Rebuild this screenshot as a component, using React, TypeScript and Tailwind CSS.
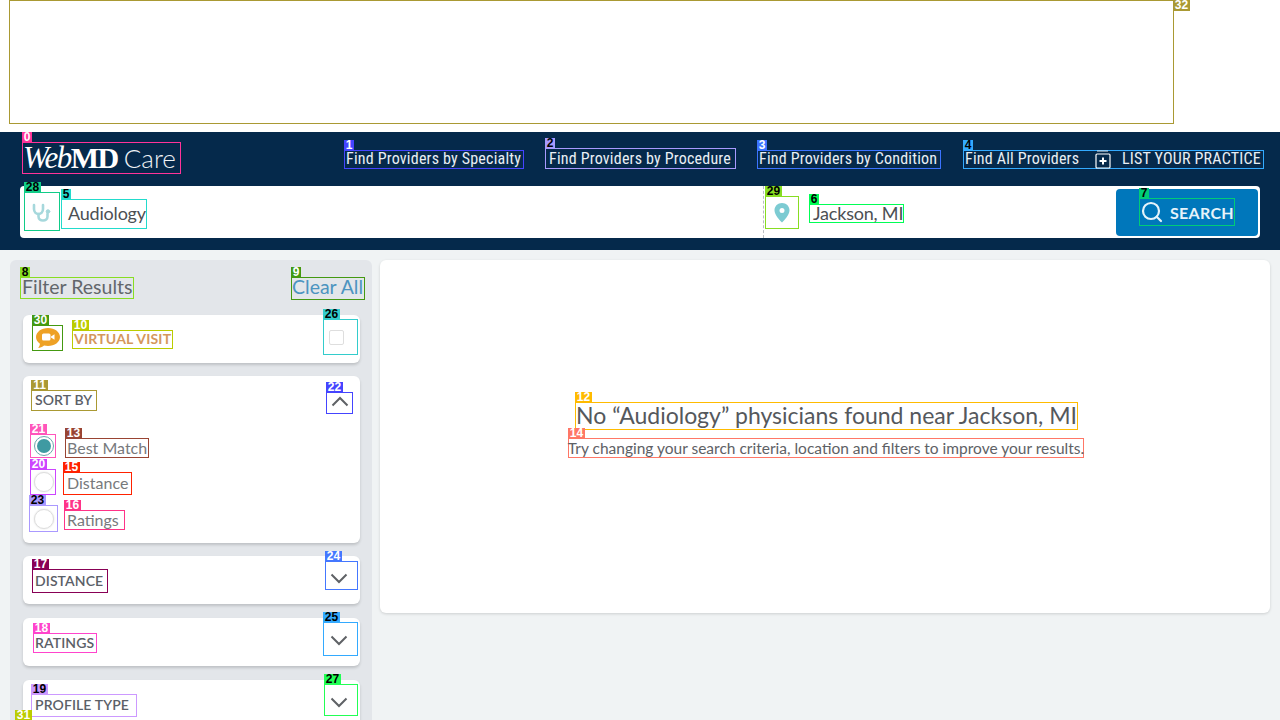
import React from "react";
import { Search } from "lucide-react";

const sans = "font-['Lato','Liberation_Sans',sans-serif]";

function Mark({
  n,
  box,
  tag,
  className = "",
  tagClass = "left-[-1px] top-[-11px]",
  children,
}: {
  n: number;
  box: string;
  tag: string;
  className?: string;
  tagClass?: string;
  children?: React.ReactNode;
}) {
  return (
    <div className={`relative border shrink-0 ${box} ${className}`}>
      {children}
      <span
        className={`absolute z-10 h-[11px] ${n > 9 ? "w-[17px]" : "w-[10px]"} text-center text-[12px] leading-[11px] font-bold font-['Liberation_Sans',sans-serif] tracking-normal whitespace-nowrap ${tag} ${tagClass}`}
      >
        {n}
      </span>
    </div>
  );
}

function Stethoscope() {
  return (
    <svg width="22" height="22" viewBox="0 0 22 22" fill="none" stroke="#a6d8dc" strokeWidth="2.6" strokeLinecap="round">
      <path d="M3 4v4c0 3 2 5 4.500 5s4.500-2 4.500-5V4" />
      <path d="M7.500 13v2.500c0 2.500 2 4 4.500 4s4.500-1.500 4.500-4V13" />
      <circle cx="17" cy="10.500" r="1.800" fill="#a6d8dc" strokeWidth="1" />
    </svg>
  );
}

function Pin() {
  return (
    <svg width="16" height="20" viewBox="0 0 16 20" className="mt-[1px]">
      <path
        fillRule="evenodd"
        d="M8 0c4.300 0 7.500 3.200 7.500 7.300C15.500 12 10.500 17 8 19.500 5.500 17 .5 12 .5 7.300.5 3.200 3.700 0 8 0zm0 5a2.500 2.500 0 100 5 2.500 2.500 0 000-5z"
        fill="#7ccbd2"
      />
    </svg>
  );
}

function VideoBubble() {
  return (
    <svg width="26" height="22" viewBox="0 0 26 22">
      <path d="M13 1c6.600 0 12 3.900 12 9s-5.400 9-12 9c-1.400 0-2.700-.2-3.900-.5C7.400 19.800 5 21 3 21c1-1 1.900-2.700 1.900-4.300C2.500 15 1 12.700 1 10c0-5.100 5.400-9 12-9z" fill="#eea125" />
      <rect x="7" y="6.500" width="8.500" height="7" rx="1.500" fill="#fff" />
      <path d="M16 9.500l3.500-2.300v5.600L16 10.500z" fill="#fff" />
    </svg>
  );
}

function PlusBox() {
  return (
    <svg width="16" height="19" viewBox="0 0 16 19" fill="none" className="shrink-0">
      <path d="M2 1h11" stroke="#dfe6ec" strokeWidth="1" />
      <rect x="1" y="4" width="14" height="14" rx="1" fill="#05294b" stroke="#fff" strokeWidth="1.200" />
      <path d="M8 7.500v7M4.500 11h7" stroke="#fff" strokeWidth="2" />
    </svg>
  );
}

function Chevron({ up }: { up?: boolean }) {
  return (
    <svg width="18" height="11" viewBox="0 0 18 11" fill="none" stroke="#5f6266" strokeWidth="2">
      <path d={up ? "M1.500 9.500L9 2l7.500 7.500" : "M1.500 1.500L9 9l7.500-7.500"} />
    </svg>
  );
}

function Radio({ on }: { on?: boolean }) {
  return (
    <span
      className={`block w-[20px] h-[20px] rounded-full border bg-white ${
        on ? "border-[#6aa7ab] p-[2px]" : "border-[#dedede] shadow-[0_0_2px_#e0e0e0]"
      }`}
    >
      {on && <span className="block w-full h-full rounded-full bg-[#3f9aa2]" />}
    </span>
  );
}

const navText =
  "font-['Roboto',sans-serif] text-[16px] leading-[17px] text-[#e9eff5] whitespace-nowrap [font-stretch:75%] tracking-[0.2px]";

const cardClass =
  "bg-white rounded-[6px] shadow-[0_2px_3px_rgba(0,0,0,0.16)] mx-[13px] w-[337px]";
const headText = "text-[14px] leading-[17px] font-semibold text-[#5b6067] tracking-[0.1px] whitespace-nowrap -mt-[2px]";
const radioText = "text-[16px] leading-[18px] text-[#77797c] whitespace-nowrap";

export default function App() {
  return (
    <div className={`w-[1280px] h-[720px] overflow-hidden bg-[#f0f3f4] ${sans}`}>
      {/* ad slot */}
      <div className="h-[132px] bg-white pl-[9px]">
        <Mark
          n={32}
          box="border-[#aa9933]"
          tag="bg-[#aa9933] text-white"
          tagClass="left-full top-[-1px]"
          className="w-[1165px] h-[124px]"
        />
      </div>

      {/* header */}
      <header className="h-[118px] bg-[#05294b] px-[20px] pt-[10px]">
        <div className="flex justify-between items-end h-[32px] pl-[2px] mr-[-4px]">
          <Mark n={0} box="border-[#ff3399]" tag="bg-[#ff3399] text-white" className="w-[159px] h-[32px] flex items-center whitespace-nowrap text-white">
            <span className="font-['Liberation_Serif',serif] italic text-[31px] leading-[30px] tracking-[-1.5px]">Web</span>
            <span className="font-['Liberation_Serif',serif] font-bold text-[30px] leading-[30px] tracking-[-1.5px]">MD</span>
            <span className="font-['Lato',sans-serif] font-light text-[26px] leading-[30px] ml-[6px] text-[#eef2f6]">Care</span>
          </Mark>
          <nav className="flex items-end gap-[21px] pb-[5px]">
            <Mark n={1} box="border-[#4444ff]" tag="bg-[#4444ff] text-white" className="w-[180px] h-[19px] pl-[1px] pb-[2px] flex items-center">
              <span className={navText}>Find Providers by Specialty</span>
            </Mark>
            <Mark n={2} box="border-[#a89aff]" tag="bg-[#a89aff] text-black" className="w-[191px] h-[21px] pl-[3px] flex items-center">
              <span className={navText}>Find Providers by Procedure</span>
            </Mark>
            <Mark n={3} box="border-[#3b73ff]" tag="bg-[#3b73ff] text-white" className="w-[184px] h-[19px] pl-[1px] pb-[2px] flex items-center">
              <span className={navText}>Find Providers by Condition</span>
            </Mark>
            <Mark n={4} box="border-[#33aaff]" tag="bg-[#33aaff] text-black" className="w-[301px] h-[19px] ml-[1px] pl-[1px] flex items-center">
              <span className={`${navText} w-[130px] -mt-[2px]`}>Find All Providers</span>
              <PlusBox />
              <span className={`${navText} ml-[11px] -mt-[2px]`}>LIST YOUR PRACTICE</span>
            </Mark>
          </nav>
        </div>

        {/* search bar */}
        <div className="mt-[12px] h-[52px] rounded-[4px] bg-white flex items-center">
          <div className="w-[744px] h-full flex items-center pl-[4px] border-r border-dashed border-[#b9bec3]">
            <Mark n={28} box="border-[#11cc88]" tag="bg-[#11cc88] text-black" className="w-[36px] h-[39px] flex items-center justify-center -mt-[1px]">
              <Stethoscope />
            </Mark>
            <Mark n={5} box="border-[#22dbcc]" tag="bg-[#22dbcc] text-black" className="w-[86px] h-[30px] ml-[1px] mt-[3px] flex items-center pl-[6px] text-[18px] tracking-[-0.2px] text-[#4c4f53]">
              Audiology
            </Mark>
          </div>
          <Mark n={29} box="border-[#88dd22]" tag="bg-[#88dd22] text-black" className="w-[34px] h-[33px] ml-[1px] flex items-center justify-center">
            <Pin />
          </Mark>
          <Mark n={6} box="border-[#00ff55]" tag="bg-[#00ff55] text-black" className="w-[95px] h-[19px] ml-[10px] mt-[2px] flex items-center pl-[3px] text-[18px] tracking-[-0.2px] leading-[19px] text-[#4c4f53] whitespace-nowrap">
            Jackson, MI
          </Mark>
          <button className="ml-[212px] w-[142px] h-[47px] rounded-[4px] bg-[#0077bb] flex items-center justify-center">
            <Mark n={7} box="border-[#00cc77]" tag="bg-[#00cc77] text-black" className="w-[96px] h-[28px] flex items-center text-[#e6f3fa]">
              <Search size={24} strokeWidth={2.2} className="shrink-0" />
              <span className="ml-[6px] mt-[2px] text-[16px] font-bold tracking-[0.3px]">SEARCH</span>
            </Mark>
          </button>
        </div>
      </header>

      {/* body */}
      <div className="flex items-start gap-[8px] pl-[10px] pt-[10px]">
        <aside className="relative w-[362px] h-[470px] rounded-t-[6px] bg-[#e3e6ea]">
          <div className="flex justify-between pl-[10px] pr-[7px] pt-[17px] h-[55px]">
            <Mark n={8} box="border-[#88dd22]" tag="bg-[#88dd22] text-black" className="w-[114px] h-[22px] pl-[1px] pb-[3px] flex items-center text-[19.500px] text-[#62666b] whitespace-nowrap">
              Filter Results
            </Mark>
            <Mark n={9} box="border-[#449911]" tag="bg-[#449911] text-white" className="w-[74px] h-[23px] pb-[3px] flex items-center text-[19.500px] text-[#4c94c0] whitespace-nowrap">
              Clear All
            </Mark>
          </div>

          {/* virtual visit */}
          <div className={`${cardClass} h-[48px] flex pl-[9px]`}>
            <Mark n={30} box="border-[#449911]" tag="bg-[#449911] text-white" className="w-[31px] h-[26px] mt-[10px] flex items-center justify-center">
              <VideoBubble />
            </Mark>
            <Mark n={10} box="border-[#bbcc00]" tag="bg-[#bbcc00] text-white" className="w-[101px] h-[19px] ml-[9px] mt-[15px] pl-[1px] pb-[2px] flex items-center text-[14px] font-bold text-[#d4975c] tracking-[0.2px] whitespace-nowrap">
              VIRTUAL VISIT
            </Mark>
            <Mark n={26} box="border-[#33cccc]" tag="bg-[#33cccc] text-black" className="w-[35px] h-[36px] ml-[150px] mt-[4px] flex items-center justify-center pr-[9px]">
              <span className="block w-[15px] h-[15px] rounded-[2px] border border-[#dedede]" />
            </Mark>
          </div>

          {/* sort by */}
          <div className={`${cardClass} h-[167px] mt-[13px] pl-[8px] relative`}>
            <div className="flex pt-[14px]">
              <Mark n={11} box="border-[#aa9933]" tag="bg-[#aa9933] text-white" className="w-[66px] h-[21px] pl-[3px] flex items-center">
                <span className={headText}>SORT BY</span>
              </Mark>
              <Mark n={22} box="border-[#4444ff]" tag="bg-[#4444ff] text-white" className="w-[27px] h-[22px] ml-[229px] mt-[2px] flex items-center justify-center pb-[4px]">
                <Chevron up />
              </Mark>
            </div>
            <div className="flex mt-[20px] ml-[-1px] h-[24px]">
              <Mark n={21} box="border-[#ff55bb]" tag="bg-[#ff55bb] text-white" className="w-[26px] h-[24px] flex items-center justify-center pl-[2px]">
                <Radio on />
              </Mark>
              <Mark n={13} box="border-[#994433]" tag="bg-[#994433] text-white" className="w-[84px] h-[20px] ml-[9px] mt-[4px] pl-[1px] flex items-center">
                <span className={radioText}>Best Match</span>
              </Mark>
            </div>
            <div className="flex mt-[11px] ml-[-1px] h-[26px]">
              <Mark n={20} box="border-[#cc44ff]" tag="bg-[#cc44ff] text-white" className="w-[26px] h-[26px] flex items-center justify-center pl-[2px]">
                <Radio />
              </Mark>
              <Mark n={15} box="border-[#ff2200]" tag="bg-[#ff2200] text-white" className="w-[69px] h-[23px] ml-[7px] mt-[3px] pl-[3px] pb-[1px] flex items-center">
                <span className={radioText}>Distance</span>
              </Mark>
            </div>
            <div className="flex mt-[10px] ml-[-2px] h-[27px]">
              <Mark n={23} box="border-[#aa99ff]" tag="bg-[#aa99ff] text-black" className="w-[29px] h-[27px] flex items-center justify-center pl-[1px]">
                <Radio />
              </Mark>
              <Mark n={16} box="border-[#ff3388]" tag="bg-[#ff3388] text-white" className="w-[61px] h-[20px] ml-[6px] mt-[5px] pl-[2px] flex items-center">
                <span className={radioText}>Ratings</span>
              </Mark>
            </div>
          </div>

          {/* distance */}
          <div className={`${cardClass} h-[48px] mt-[13px] pl-[9px] flex`}>
            <Mark n={17} box="border-[#880055]" tag="bg-[#880055] text-white" className="w-[76px] h-[24px] mt-[13px] pl-[2px] flex items-center">
              <span className={headText}>DISTANCE</span>
            </Mark>
            <Mark n={24} box="border-[#4477ff]" tag="bg-[#4477ff] text-white" className="w-[33px] h-[29px] ml-[217px] mt-[5px] flex items-center justify-center pt-[6px] pr-[5px]">
              <Chevron />
            </Mark>
          </div>

          {/* ratings */}
          <div className={`${cardClass} h-[48px] mt-[14px] pl-[10px] flex`}>
            <Mark n={18} box="border-[#ff44cc]" tag="bg-[#ff44cc] text-white" className="w-[64px] h-[20px] mt-[15px] pl-[1px] flex items-center">
              <span className={headText}>RATINGS</span>
            </Mark>
            <Mark n={25} box="border-[#33aaff]" tag="bg-[#33aaff] text-black" className="w-[35px] h-[34px] ml-[226px] mt-[4px] flex items-center justify-center pt-[2px] pr-[3px]">
              <Chevron />
            </Mark>
          </div>

          {/* profile type */}
          <div className={`${cardClass} h-[48px] mt-[14px] pl-[8px] flex`}>
            <Mark n={19} box="border-[#cc99ff]" tag="bg-[#cc99ff] text-black" className="w-[106px] h-[23px] mt-[14px] pl-[3px] flex items-center">
              <span className={headText}>PROFILE TYPE</span>
            </Mark>
            <Mark n={27} box="border-[#22ff55]" tag="bg-[#22ff55] text-black" className="w-[34px] h-[32px] ml-[187px] mt-[4px] flex items-center justify-center pt-[5px] pr-[4px]">
              <Chevron />
            </Mark>
          </div>

          <span className="absolute left-[5px] top-[450px] h-[10px] w-[17px] text-center bg-[#bbcc00] text-white text-[12px] leading-[10px] font-bold font-['Liberation_Sans',sans-serif]">
            31
          </span>
        </aside>

        {/* results */}
        <main className="w-[890px] h-[353px] bg-white rounded-[6px] shadow-[0_1px_3px_rgba(0,0,0,0.15)] flex flex-col items-center pt-[142px]">
          <Mark n={12} box="border-[#ffbb00]" tag="bg-[#ffbb00] text-white" className="w-[503px] h-[28px] ml-[3px] pb-[3px] flex items-center justify-center text-[23px] leading-[26px] text-[#55585c] whitespace-nowrap">
            No “Audiology” physicians found near Jackson, MI
          </Mark>
          <Mark n={14} box="border-[#ff7766]" tag="bg-[#ff7766] text-white" className="w-[516px] h-[20px] mt-[8px] ml-[2px] pb-[1px] flex items-center justify-center text-[15.500px] leading-[18px] text-[#5e6165] whitespace-nowrap">
            Try changing your search criteria, location and filters to improve your results.
          </Mark>
        </main>
      </div>
    </div>
  );
}
